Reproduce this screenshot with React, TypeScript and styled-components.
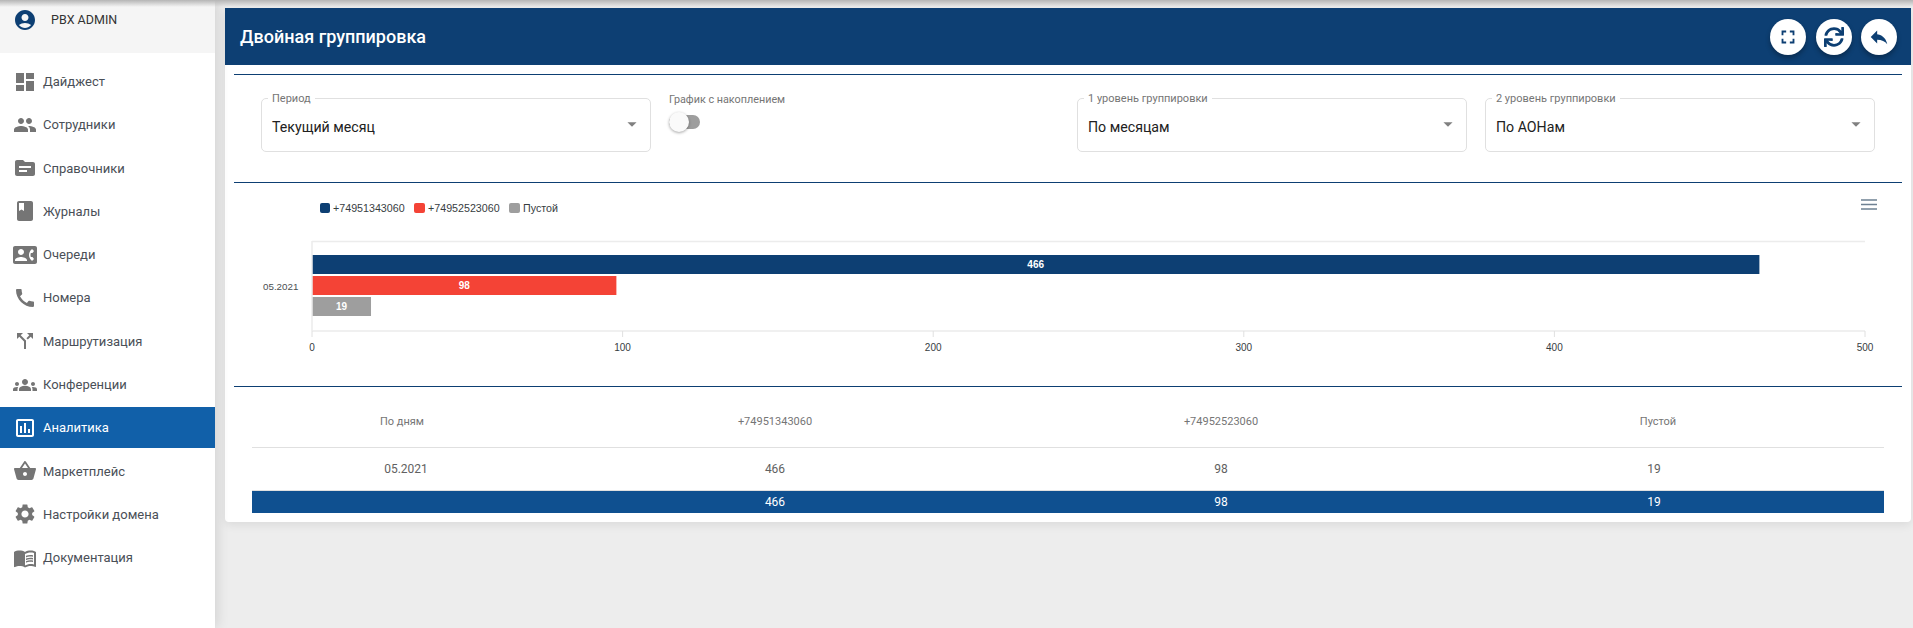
import styled, { createGlobalStyle } from 'styled-components'
import {
  MdAccountCircle,
  MdArrowDropDown,
  MdCall,
  MdCallSplit,
  MdContactPhone,
  MdBook,
  MdDashboard,
  MdFullscreen,
  MdGroups,
  MdMenuBook,
  MdOutlineAssessment,
  MdPeople,
  MdReply,
  MdSettings,
  MdShoppingBasket,
  MdTopic,
} from 'react-icons/md'
import { FaSync } from 'react-icons/fa'

const NAVY = '#0d3f73'

const GlobalStyle = createGlobalStyle`
  html, body {
    margin: 0;
    padding: 0;
    height: 100%;
    overflow: hidden;
    background: #ededed;
    font-family: Roboto, "Liberation Sans", sans-serif;
  }
  * {
    box-sizing: border-box;
  }
`

const Page = styled.div`
  position: relative;
  display: flex;
  width: 1913px;
  height: 628px;
  overflow: hidden;
`

const TopShadow = styled.div`
  position: absolute;
  top: 0;
  left: 0;
  right: 0;
  height: 7px;
  background: linear-gradient(#b5b5b5, rgba(237, 237, 237, 0));
  z-index: 3;
`

const Sidebar = styled.aside`
  width: 215px;
  flex: none;
  background: #fff;
  box-shadow: 2px 0 12px rgba(0, 0, 0, 0.12);
  z-index: 2;
`

const UserBar = styled.div`
  display: flex;
  align-items: flex-start;
  gap: 14px;
  height: 53px;
  padding: 8px 13px 0;
  background: #f5f5f5;
  color: ${NAVY};
  font-size: 24px;
`

const UserName = styled.span`
  font-size: 12.5px;
  line-height: 24px;
  color: #333;
`

const NavList = styled.nav`
  display: flex;
  flex-direction: column;
  gap: 2.3px;
  padding-top: 8px;
`

const NavItem = styled.div<{ $active?: boolean }>`
  display: flex;
  align-items: center;
  gap: 6px;
  height: 41px;
  padding-left: 13px;
  font-size: 13px;
  background: ${(p) => (p.$active ? '#1160a9' : 'transparent')};
  color: ${(p) => (p.$active ? '#fff' : '#4a4f57')};
  svg {
    font-size: 24px;
    flex: none;
    color: ${(p) => (p.$active ? '#fff' : '#757575')};
  }
`

const Main = styled.main`
  flex: 1;
  padding: 8px 2px 0 10px;
`

const Card = styled.section`
  height: 514px;
  background: #fff;
  border-radius: 4px;
  box-shadow: 0 3px 10px rgba(0, 0, 0, 0.08);
`

const CardHeader = styled.header`
  display: flex;
  align-items: center;
  justify-content: space-between;
  height: 57px;
  padding: 0 14px 0 15px;
  background: ${NAVY};
`

const Title = styled.h1`
  margin: 0;
  font-size: 18px;
  font-weight: 500;
  color: #fff;
`

const HeaderActions = styled.div`
  display: flex;
  gap: 9.5px;
`

const RoundButton = styled.button<{ $size: number }>`
  display: flex;
  align-items: center;
  justify-content: center;
  width: 36px;
  height: 36px;
  padding: 0;
  border: 0;
  border-radius: 50%;
  background: #fff;
  color: ${NAVY};
  font-size: ${(p) => p.$size}px;
  box-shadow: 0 3px 5px rgba(0, 0, 0, 0.3);
`

const Divider = styled.hr`
  height: 1px;
  margin: 0 9px 0 9px;
  border: 0;
  background: ${NAVY};
`

const TopDivider = styled(Divider)`
  margin-top: 9px;
`

const Filters = styled.div`
  display: grid;
  grid-template-columns: repeat(4, 389.6px);
  column-gap: 18.4px;
  height: 107px;
  padding: 23px 0 0 36px;
`

const Outlined = styled.div`
  position: relative;
  display: flex;
  align-items: center;
  justify-content: space-between;
  height: 54px;
  padding: 3px 7px 0 10px;
  border: 1px solid #e0e0e0;
  border-radius: 5px;
  font-size: 14.2px;
  color: #212121;
  svg {
    font-size: 22px;
    color: #808080;
    margin-top: -6px;
  }
`

const FloatLabel = styled.label`
  position: absolute;
  top: -7px;
  left: 6px;
  padding: 0 4px;
  background: #fff;
  font-size: 11px;
  line-height: 13px;
  color: #757575;
`

const SwitchField = styled.div`
  display: flex;
  flex-direction: column;
  align-items: flex-start;
  gap: 7px;
  margin-top: -5px;
  font-size: 10.8px;
  line-height: 13px;
  color: #757575;
`

const SwitchTrack = styled.div`
  position: relative;
  width: 31px;
  height: 14px;
  margin-top: 2px;
  border-radius: 7px;
  background: #9e9e9e;
`

const SwitchThumb = styled.span`
  position: absolute;
  top: -3px;
  left: 0;
  width: 20px;
  height: 20px;
  border-radius: 50%;
  background: #fafafa;
  box-shadow: 0 1px 3px rgba(0, 0, 0, 0.35);
`

const ChartSvg = styled.svg`
  display: block;
  width: 1686px;
  height: 203px;
  font-family: "Liberation Sans", Arial, sans-serif;
`

const DataTable = styled.div`
  margin: 0 27px;
`

const Row = styled.div<{ $kind: 'head' | 'body' | 'total' }>`
  display: grid;
  grid-template-columns: 300px 446px 446px 420px;
  align-items: center;
  text-align: center;
  height: ${(p) => ({ head: 61, body: 43, total: 22 })[p.$kind]}px;
  padding-top: ${(p) => (p.$kind === 'head' ? 8 : 0)}px;
  font-size: ${(p) => (p.$kind === 'head' ? 11 : 12)}px;
  color: ${(p) => ({ head: '#757575', body: '#616161', total: '#fff' })[p.$kind]};
  background: ${(p) => (p.$kind === 'total' ? '#0f5090' : 'transparent')};
  border-bottom: ${(p) => (p.$kind === 'total' ? 0 : '1px solid #e0e0e0')};
`

const DateCell = styled.span`
  padding-left: 8px;
`

const LastHeadCell = styled.span`
  padding-left: 8px;
`

const navItems = [
  { label: 'Дайджест', icon: <MdDashboard /> },
  { label: 'Сотрудники', icon: <MdPeople /> },
  { label: 'Справочники', icon: <MdTopic /> },
  { label: 'Журналы', icon: <MdBook /> },
  { label: 'Очереди', icon: <MdContactPhone /> },
  { label: 'Номера', icon: <MdCall /> },
  { label: 'Маршрутизация', icon: <MdCallSplit /> },
  { label: 'Конференции', icon: <MdGroups /> },
  { label: 'Аналитика', icon: <MdOutlineAssessment />, active: true },
  { label: 'Маркетплейс', icon: <MdShoppingBasket /> },
  { label: 'Настройки домена', icon: <MdSettings /> },
  { label: 'Документация', icon: <MdMenuBook /> },
]

const PX_PER_UNIT = 3.106
const CHART_LEFT = 312
const CHART_RIGHT = 1865

const series = [
  { name: '+74951343060', value: 466, color: NAVY, y: 255, legendX: 320, width: 10 },
  { name: '+74952523060', value: 98, color: '#f44336', y: 276, legendX: 414, width: 11 },
  { name: 'Пустой', value: 19, color: '#9e9e9e', y: 297, legendX: 509, width: 11 },
]

const ticks = [0, 100, 200, 300, 400, 500]

const Chart = () => (
  <ChartSvg viewBox='225 183 1686 203'>
    {series.map((s) => (
      <g key={s.name}>
        <rect x={s.legendX} y={203} width={s.width} height={10} rx={2} fill={s.color} />
        <text x={s.legendX + s.width + 3} y={212} fontSize={10.7} fill='#373d3f'>
          {s.name}
        </text>
        <rect
          x={CHART_LEFT}
          y={s.y}
          width={s.value * PX_PER_UNIT}
          height={19}
          fill={s.color}
        />
        <text
          x={CHART_LEFT + (s.value * PX_PER_UNIT) / 2}
          y={s.y + 13}
          fontSize={10}
          fontWeight='bold'
          textAnchor='middle'
          fill='#fff'
        >
          {s.value}
        </text>
      </g>
    ))}
    <path
      d={`M${CHART_LEFT} 241.5H${CHART_RIGHT}M${CHART_LEFT} 331H${CHART_RIGHT}M${CHART_LEFT} 241V331`}
      stroke='#ececec'
      strokeWidth={1.5}
      fill='none'
    />
    {ticks.map((t) => {
      const x = CHART_LEFT + t * PX_PER_UNIT
      return (
        <g key={t}>
          <line x1={x} x2={x} y1={331} y2={337} stroke='#e0e0e0' />
          <text x={x} y={351} fontSize={10} textAnchor='middle' fill='#373d3f'>
            {t}
          </text>
        </g>
      )
    })}
    <text x={263} y={290} fontSize={9.8} fill='#4a4f52'>
      05.2021
    </text>
    <path d='M1861 200h16M1861 204.500h16M1861 209h16' stroke='#6e8192' strokeWidth={1.5} />
  </ChartSvg>
)

const Select = ({ label, value }: { label: string; value: string }) => (
  <Outlined>
    <FloatLabel>{label}</FloatLabel>
    {value}
    <MdArrowDropDown />
  </Outlined>
)

const App = () => (
  <Page>
    <GlobalStyle />
    <TopShadow />
    <Sidebar>
      <UserBar>
        <MdAccountCircle />
        <UserName>PBX ADMIN</UserName>
      </UserBar>
      <NavList>
        {navItems.map((item) => (
          <NavItem key={item.label} $active={item.active}>
            {item.icon}
            {item.label}
          </NavItem>
        ))}
      </NavList>
    </Sidebar>
    <Main>
      <Card>
        <CardHeader>
          <Title>Двойная группировка</Title>
          <HeaderActions>
            <RoundButton $size={22}>
              <MdFullscreen />
            </RoundButton>
            <RoundButton $size={20}>
              <FaSync />
            </RoundButton>
            <RoundButton $size={22}>
              <MdReply />
            </RoundButton>
          </HeaderActions>
        </CardHeader>
        <TopDivider />
        <Filters>
          <Select label='Период' value='Текущий месяц' />
          <SwitchField>
            График с накоплением
            <SwitchTrack>
              <SwitchThumb />
            </SwitchTrack>
          </SwitchField>
          <Select label='1 уровень группировки' value='По месяцам' />
          <Select label='2 уровень группировки' value='По АОНам' />
        </Filters>
        <Divider />
        <Chart />
        <Divider />
        <DataTable>
          <Row $kind='head'>
            <span>По дням</span>
            <span>+74951343060</span>
            <span>+74952523060</span>
            <LastHeadCell>Пустой</LastHeadCell>
          </Row>
          <Row $kind='body'>
            <DateCell>05.2021</DateCell>
            <span>466</span>
            <span>98</span>
            <span>19</span>
          </Row>
          <Row $kind='total'>
            <span />
            <span>466</span>
            <span>98</span>
            <span>19</span>
          </Row>
        </DataTable>
      </Card>
    </Main>
  </Page>
)

export default App
